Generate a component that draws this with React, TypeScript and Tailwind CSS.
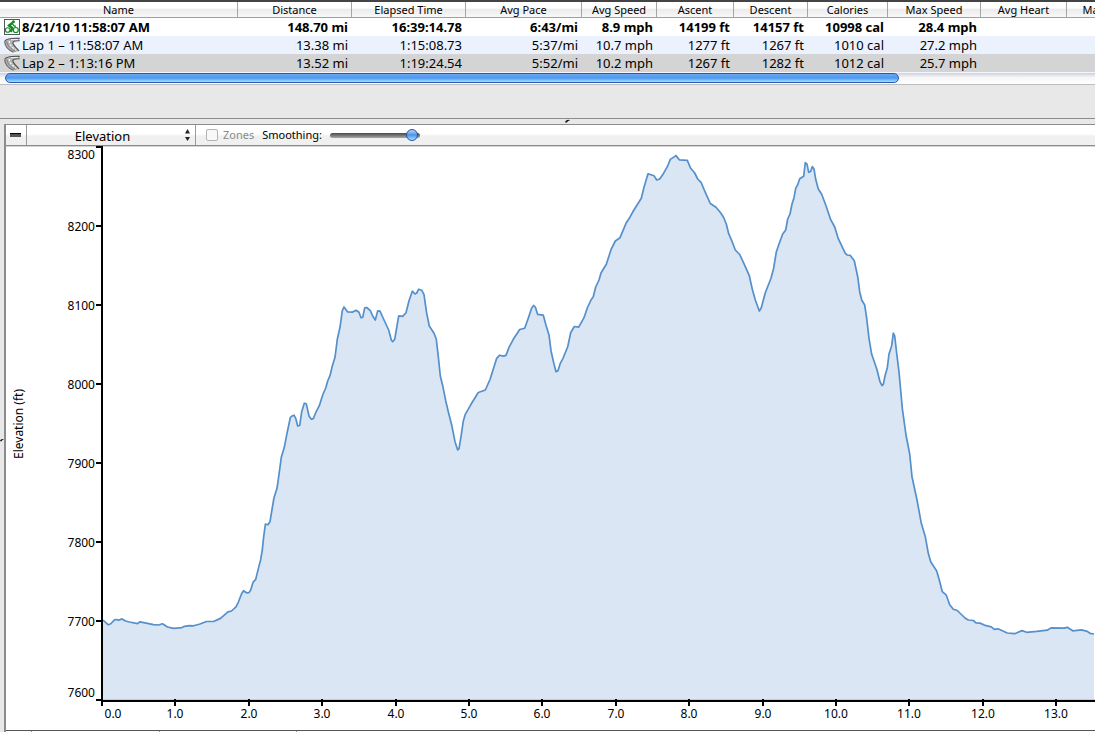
import { useState } from 'react';

type Row = {
  name: string;
  kind: 'activity' | 'lap';
  values: string[];
};

const COLUMNS = [
  { label: 'Name', width: 'w-[238px]' },
  { label: 'Distance', width: 'w-[114px]' },
  { label: 'Elapsed Time', width: 'w-[114px]' },
  { label: 'Avg Pace', width: 'w-[116px]' },
  { label: 'Avg Speed', width: 'w-[75px]' },
  { label: 'Ascent', width: 'w-[77px]' },
  { label: 'Descent', width: 'w-[74px]' },
  { label: 'Calories', width: 'w-[80px]' },
  { label: 'Max Speed', width: 'w-[93px]' },
  { label: 'Avg Heart', width: 'w-[86px]' },
  { label: 'Max Heart', width: 'w-[86px]' },
];

const ROWS: Row[] = [
  {
    name: '8/21/10 11:58:07 AM',
    kind: 'activity',
    values: ['148.70 mi', '16:39:14.78', '6:43/mi', '8.9 mph', '14199 ft', '14157 ft', '10998 cal', '28.4 mph', '', ''],
  },
  {
    name: 'Lap 1 – 11:58:07 AM',
    kind: 'lap',
    values: ['13.38 mi', '1:15:08.73', '5:37/mi', '10.7 mph', '1277 ft', '1267 ft', '1010 cal', '27.2 mph', '', ''],
  },
  {
    name: 'Lap 2 – 1:13:16 PM',
    kind: 'lap',
    values: ['13.52 mi', '1:19:24.54', '5:52/mi', '10.2 mph', '1267 ft', '1282 ft', '1012 cal', '25.7 mph', '', ''],
  },
];

const ROW_STYLES = ['bg-white font-bold', 'bg-[#ebf2fe]', 'bg-[#d4d4d4]'];

// Elevation trace in chart coordinates
const TRACE = `103,620 108,624.7 110.5,624 114.5,619.9 116.5,619.5 118.5,620.3 122,618.9 125.5,621 129.5,622 137.5,623.6
140,621.8 147.5,623.3 153.5,624.6 158.5,625 162.5,623.8 167.5,627 173.5,628.4 182,627.6 184.5,626.3 189.5,625.7
193.5,625.8 200,624 206.5,621.5 213.5,621.5 220.5,618.4 228,611.8 231.5,611 236,606.8 238.5,601.8 241.5,594
243.5,590.7 246.5,592.8 249,592.6 250.7,590 253,582.4 255.7,579.4 258.4,568.4 260.6,560 262.3,550 263.7,536.7
265.4,524 268,524.7 270,521.7 272,509.5 274,497.7 277,488.3 278.7,476.7 281.3,457.3 284.3,447.3 287,433.3
290.3,417.7 292,416 294,415.2 295.7,418.3 297.7,426 299.7,425.5 301.7,411.7 304.3,403.2 306.3,403.8 309,416
311.3,419.2 313.3,418.6 315.7,412.7 319.3,405.7 322.7,395 325.7,388 327.7,381 330,375.7 332.3,366 335,357.3
337.3,339.3 340,327.3 342.3,310.7 344,307 347.7,312 352.3,312.2 356,310.2 359,312.3 361,317.7 362.7,317.4
364.7,307.9 366.7,307.5 370.3,310.7 372.7,316 375.3,320 377.7,310.9 380,311.2 384,320 388.7,330 391.3,340
392.7,341.7 394.7,339.3 396.3,330 398.7,315.8 402.7,316.4 406,312.7 409,300.7 412.3,291.2 415,294 416.7,293
418.7,289.2 421.7,290.2 424,294.7 426.7,313.3 429.3,326 434,333.3 436.3,339.3 438.3,356.7 440.3,376 442.7,385.7
445.7,400.7 448.3,411.7 451.7,425 455,441.7 457.7,450 459,448.7 461,436.7 463.3,421 465.3,414.3 471,404.3
478.3,392.5 485.3,390 490,379.5 496.7,358.3 499.7,355.2 503.3,356.1 506,355.4 509,347.3 513.3,339.3 519.7,329.5
524.7,328.2 528,319 531.7,308 533.7,305.5 535.3,307 537.7,314.4 543.3,315.2 546,325.3 549,335 551,350.7
553.7,362.7 556,371.7 558,370.7 560.3,363.3 563,358.3 567.7,346.7 570.7,332.7 574.3,326.5 578.7,327.1 584,317.7
587.3,308 591,300 593.3,296.7 595.7,287 599,280 601,273 606.3,264.3 611,249.7 615.3,241 620,237.7 626,223.3
629.3,218.3 633.3,211 641.3,198.3 644,187.3 648,173.8 654,175.8 656.7,180 659.7,179 663,174.3 667.3,166.7
670.3,159.4 676,155.6 679.3,159.8 687.3,160.4 690.7,168.3 694.7,173 697.7,179 701.3,182.7 705,191.7 710.3,203.5
716,207.2 720,212 723.3,216.7 726.3,224 728.7,233.7 732,241.3 735.3,250 739.7,254.5 744.3,264.3 749.3,275.7
752.3,289.3 755.3,300 759.3,311 761.3,307.7 765.3,292.7 771,278.3 773.7,268 776.3,252 779,244 782.7,234
785.7,230 787.7,219 790,214 792,204 794,197.7 795.7,188.3 797.7,184.7 799.7,178.8 803.7,176.2 805.3,162.5
807,164.2 808.7,172.3 810.7,171.2 812.3,166.6 814,169 815.7,179.3 818.3,189 821.7,194.3 826,205.7 830.7,219.7
834.7,227 838.3,238.7 845.3,253.3 847.3,255 850.3,255.4 854.3,260.7 857.7,276.7 859.7,291.7 861.7,300 864.7,305
866.7,318.3 869,338.3 871.7,354.3 876.7,368.7 880,381.7 882,385.6 883.3,384.3 885,376 887.3,367.7 889,354
891.7,345.7 893.3,333.2 894.7,336 896.7,353.3 899,372 900.3,386 902.3,408.3 906,435 909.7,454 912,476.7 917,500
921.3,523.3 925.3,536.7 928.3,553.3 930.7,561.7 936.7,571 939.3,580 942.3,591.7 946.3,595.2 949.7,604.7
953.3,609.3 957.3,610.5 965,618 968.3,620 973.3,620.5 976,622.8 980,623.1 986,625.7 991.3,626.8 994.3,629.3
998,628.8 1007.3,633 1014.7,633.7 1022,630.6 1026.7,632.3 1036.7,631.4 1047.3,630.2 1051,627.9 1064,628.1
1067.3,627.3 1072.7,630.8 1081.3,629.9 1087.3,631.4 1090,633.3 1094,634`;

const Y_TICKS = [
  { label: '8300', y: 147, textY: 159 },
  { label: '8200', y: 226, textY: 231 },
  { label: '8100', y: 305, textY: 310 },
  { label: '8000', y: 384, textY: 389 },
  { label: '7900', y: 463, textY: 468 },
  { label: '7800', y: 542, textY: 547 },
  { label: '7700', y: 621, textY: 626 },
  { label: '7600', y: 700, textY: 697 },
];

const MILES = Array.from({ length: 14 }, (_, i) => i);

function BikeIcon() {
  return (
    <svg width="16" height="16" viewBox="0 0 16 16" className="shrink-0" aria-hidden="true">
      <rect x="0.5" y="0.5" width="15" height="15" fill="#fff" stroke="#555" />
      <g fill="none" stroke="#0b8a1e">
        <circle cx="3.7" cy="11" r="2.3" strokeWidth="1.1" />
        <circle cx="11.8" cy="11" r="2.5" strokeWidth="1.2" />
        <path d="M8.6 3.8 5 6.5 8.2 9 6.8 13" strokeWidth="2.4" />
        <path d="M8.6 5.2 10.3 7.2H12" strokeWidth="1.3" />
      </g>
      <circle cx="9.4" cy="2.7" r="1.5" fill="#0b8a1e" />
    </svg>
  );
}

function LapIcon() {
  return (
    <svg width="16" height="16" viewBox="0 0 16 16" className="shrink-0" aria-hidden="true">
      <path d="M0.6 4.2C2.5 1.4 8 0.8 15.6 1.4V3.6C10.5 3.2 8.4 4.4 9 6.6 9.7 8.8 12.4 10.6 15 14L9.6 15.2C4.5 13.2 1 9.4 0.6 4.2Z" fill="#b4b4b4" />
      <path d="M0.6 4.2C1 9.4 4.5 13.2 9.6 15.2" fill="none" stroke="#6a6a6a" strokeWidth="1.2" />
      <path d="M2.8 4.4C3.4 8.8 6.4 12 11.6 14.4" fill="none" stroke="#7c7c7c" strokeWidth="1" />
      <path d="M0.8 3.8C3.5 1.4 8.5 1 15.6 1.4M15.6 3.8C10.5 3.4 8.2 4.6 9 6.8 9.7 8.8 12.4 10.6 15 14" fill="none" stroke="#4c4c4c" strokeWidth="1.1" />
      <path d="M5.4 4C5 7.2 8 10.4 12 13" fill="none" stroke="#fff" strokeWidth="1.2" strokeDasharray="2 1.6" />
      <path d="M7 2.6H14" fill="none" stroke="#f0f0f0" />
    </svg>
  );
}

function ActivityTable() {
  return (
    <div className="overflow-hidden border-t-2 border-[#444] bg-[#f1f5fe] pb-px">
      <table className="w-full min-w-[1153px] table-fixed border-separate border-spacing-0">
        <thead>
          <tr>
            {COLUMNS.map((c) => (
              <th
                key={c.label}
                scope="col"
                className={`${c.width} h-4 overflow-hidden border-r border-b border-r-[#a6a6a6] border-b-[#a0a0a0] bg-linear-to-b from-white from-40% via-[#ececec] via-50% to-[#f8f8f8] p-0 text-center text-[11px] leading-[15px] font-normal whitespace-nowrap`}
              >
                {c.label}
              </th>
            ))}
          </tr>
        </thead>
        <tbody className="text-[13px] leading-[18px] whitespace-nowrap">
          {ROWS.map((row, i) => (
            <tr key={row.name} className={ROW_STYLES[i]}>
              <td className="p-0">
                <div className="flex items-center gap-[2px] pl-1">
                  {row.kind === 'activity' ? <BikeIcon /> : <LapIcon />}
                  <span>{row.name}</span>
                </div>
              </td>
              {row.values.map((v, j) => (
                <td key={j} className="p-0 pr-1 text-right">{v}</td>
              ))}
            </tr>
          ))}
        </tbody>
      </table>
    </div>
  );
}

function HorizontalScrollbar() {
  return (
    <div className="border-b border-[#bdbdbd] bg-linear-to-b from-[#d0d0dc] via-[#f6f6f6] via-40% to-white pb-px pl-[5px]">
      <div className="h-[10px] w-[82%] rounded-full border border-[#2a5ab0] bg-linear-to-b from-[#6ea6ec] via-[#4c9af0] via-50% to-[#a4e0ff]" />
    </div>
  );
}

function Toolbar() {
  const [graph, setGraph] = useState('Elevation');
  const [smoothing, setSmoothing] = useState(98);

  return (
    <div className="flex h-[22px] items-stretch border-y border-[#8c8c8c] bg-linear-to-b from-white from-45% to-[#f0f0f0] to-55% text-[11px]">
      <button type="button" aria-label="Collapse" className="flex w-[21px] items-center justify-center border-r border-[#9a9a9a] pr-px">
        <span className="h-1 w-[11px] border-t border-black bg-[#555]" />
      </button>
      <div className="flex w-[169px] items-center border-r border-[#9a9a9a]">
        <select
          aria-label="Graph"
          value={graph}
          onChange={(e) => setGraph(e.target.value)}
          className="w-[151px] appearance-none bg-transparent pt-[2px] text-center text-[13px] leading-[18px] [text-align-last:center]"
        >
          <option>Elevation</option>
          <option>Speed</option>
          <option>Pace</option>
        </select>
        <svg width="17" height="14" viewBox="0 0 17 14" className="shrink-0" aria-hidden="true">
          <path d="M7 5.5 9.5 1 12 5.5ZM7 9 9.5 13 12 9Z" fill="#222" />
        </svg>
      </div>
      <div className="flex items-center pl-[10px]">
        <input id="zones" type="checkbox" disabled className="h-3 w-3 appearance-none rounded-[2px] border border-[#b4b4b4] bg-[#f8f8f8]" />
        <label htmlFor="zones" className="pl-[5px] text-[#8a8a8a]">Zones</label>
        <label htmlFor="smoothing" className="pl-2">Smoothing:</label>
        <input
          id="smoothing"
          type="range"
          min={0}
          max={100}
          value={smoothing}
          onChange={(e) => setSmoothing(Number(e.target.value))}
          className="ml-2 h-[14px] w-[90px] appearance-none bg-transparent [&::-webkit-slider-runnable-track]:h-[5px] [&::-webkit-slider-runnable-track]:rounded-full [&::-webkit-slider-runnable-track]:bg-linear-to-b [&::-webkit-slider-runnable-track]:from-[#4a4a4a] [&::-webkit-slider-runnable-track]:to-[#a8a8a8] [&::-webkit-slider-thumb]:-mt-1 [&::-webkit-slider-thumb]:h-3 [&::-webkit-slider-thumb]:w-3 [&::-webkit-slider-thumb]:appearance-none [&::-webkit-slider-thumb]:rounded-full [&::-webkit-slider-thumb]:border [&::-webkit-slider-thumb]:border-[#2853a0] [&::-webkit-slider-thumb]:bg-linear-to-b [&::-webkit-slider-thumb]:from-[#b8d4f8] [&::-webkit-slider-thumb]:via-[#4b93ea] [&::-webkit-slider-thumb]:to-[#a5e2ff]"
        />
      </div>
    </div>
  );
}

function ElevationChart() {
  return (
    <svg viewBox="6 146 1089 584" className="block h-auto w-full bg-white" role="img" aria-label="Elevation by distance">
      <path d="M6 146.5H1095" stroke="#d4d4d4" />
      <polygon points={`103,699 ${TRACE} 1094,699`} fill="#dae6f4" />
      <path d="M103 699.5H1095" stroke="#c2ccd8" />
      <polyline points={TRACE} fill="none" stroke="#5590cb" strokeWidth="1.7" strokeLinejoin="round" />
      <path d="M102 146V702M101 701H1095" stroke="#000" strokeWidth="2" />
      <g fontSize="12" fill="#000">
        {Y_TICKS.map((t) => (
          <g key={t.label}>
            <path d={`M96 ${t.y}H102`} stroke="#000" strokeWidth="2" />
            <text x="95" y={t.textY} textAnchor="end">{t.label}</text>
          </g>
        ))}
        {MILES.map((m) => {
          const x = Math.round(102 + m * 73.4);
          return (
            <g key={m}>
              <path d={`M${x} 699V706`} stroke="#000" strokeWidth="2" />
              <text x={m === 0 ? 113 : x} y="718" textAnchor="middle">{m.toFixed(1)}</text>
            </g>
          );
        })}
        <text x="23" y="424" textAnchor="middle" transform="rotate(-90 23 424)">Elevation (ft)</text>
      </g>
    </svg>
  );
}

function Grip() {
  return (
    <svg width="5" height="4" viewBox="0 0 5 4" aria-hidden="true">
      <path d="M0 3.5C0.5 0.5 4 0 5 1.5L3 2 2 3.5Z" fill="#111" />
    </svg>
  );
}

function App() {
  return (
    <div className="flex min-h-screen flex-col overflow-hidden bg-[#e8e8e8] font-['Noto_Sans','Open_Sans',sans-serif] text-black">
      <ActivityTable />
      <HorizontalScrollbar />
      <div className="h-[33px]" />
      <div className="flex h-[6px] items-start justify-center border-t border-[#8c8c8c] pl-[40px]">
        <Grip />
      </div>
      <div className="flex flex-1">
        <div className="flex w-1 items-center overflow-hidden pt-6">
          <Grip />
        </div>
        <div className="min-w-0 flex-1 border-l-2 border-[#8c8c8c]">
          <Toolbar />
          <ElevationChart />
          <div className="flex h-[2px] border-t border-[#555] bg-white">
            <div className="w-[26px] border-r border-[#999]" />
            <div className="w-[128px] border-r border-[#999]" />
            <div className="w-[137px] border-r border-[#999]" />
          </div>
        </div>
      </div>
    </div>
  );
}

export default App;
